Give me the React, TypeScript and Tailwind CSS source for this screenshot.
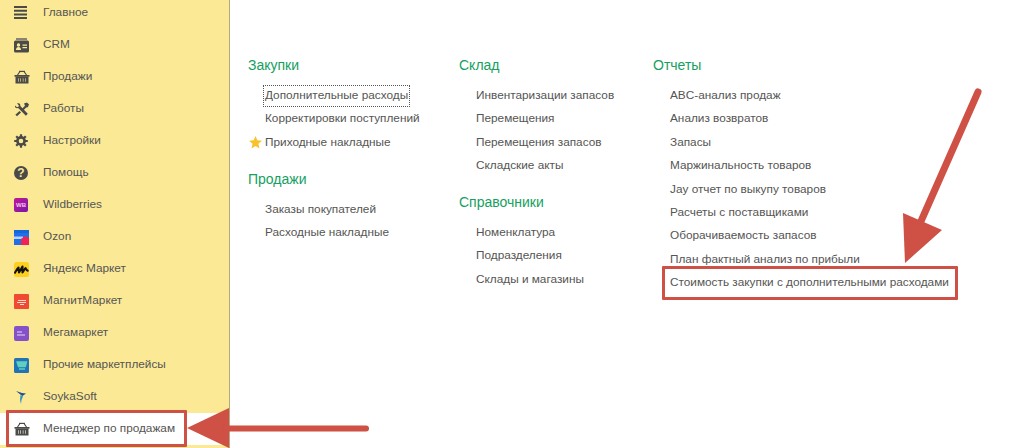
import React from 'react';

const ink = '#4a4a48';

const Basket = () => (
  <svg width="16" height="14" viewBox="0 0 16 14">
    <path d="M.5 5h15v1.700H.5z" fill={ink} />
    <path d="M3.500 5 6 1.500M12.500 5 10 1.500" stroke={ink} strokeWidth="1.200" fill="none" />
    <path d="M5 .8h6V2H5z" fill={ink} />
    <path fillRule="evenodd" d="M1.500 6.500h13V13.500h-13zM4 8.200v3.600h.6V8.200zm2.300 0v3.600h.6V8.200zm2.500 0v3.600h.6V8.200zm2.400 0v3.600h.6V8.200z" fill={ink} />
  </svg>
);

const Burger = () => (
  <svg width="14" height="14" viewBox="0 0 14 14">
    <path d="M0 0h13v2H0zM0 3.700h13v2H0zM0 7.400h13v2H0zM0 11.100h13v2H0z" fill={ink} />
  </svg>
);

const Crm = () => (
  <svg width="15" height="15" viewBox="0 0 15 15">
    <path d="M2 0h11v2H2z" fill="#8a8470" />
    <rect x="0" y="2.500" width="15" height="12" rx="1.500" fill={ink} />
    <circle cx="4.500" cy="7" r="1.700" fill="#fbe996" />
    <path d="M2 12c0-2 1-3 2.500-3S7 10 7 12zM8.500 6.500H13v1.200H8.500zM8.500 9H13v1.200H8.500z" fill="#fbe996" />
  </svg>
);

const Tools = () => (
  <svg width="16" height="15" viewBox="0 0 16 15">
    <path d="M1 3.500 3 5.200l1.500-.4.3-1.600L3 1.600C5 .4 6.800 2 6.300 4l7.500 7.800-1.900 1.900L4.200 6C2.300 6.600.5 5.400 1 3.500Z" fill={ink} />
    <path d="M10 1.500l3-1 2 2-1.200 2.800-1.600.3L9 8.800 7.500 7.300 11 3.800z" fill={ink} />
    <path d="M5.500 9 7 10.500 3 14.300 1.400 12.800z" fill={ink} />
  </svg>
);

const Gear = () => (
  <svg width="14" height="14" viewBox="0 0 14 14">
    <circle cx="7" cy="7" r="3.600" fill="none" stroke={ink} strokeWidth="2.600" />
    <path d="M7 .2v3M7 10.800v3M.2 7h3M10.800 7h3M2.200 2.200l2 2M9.800 9.800l2 2M11.800 2.200l-2 2M4.200 9.800l-2 2" stroke={ink} strokeWidth="2.200" />
  </svg>
);

const Help = () => (
  <div className="w-[14px] h-[14px] rounded-full bg-[#4a4a48] text-[#fbe996] text-[12px] font-bold leading-[14px] text-center">?</div>
);

const Wb = () => (
  <div className="w-[14px] h-[14px] rounded-[2px] bg-gradient-to-br from-[#c2109a] to-[#7a11a8] text-[#f3c8ee] text-[6px] font-bold leading-[14px] text-center">WB</div>
);

const Ozon = () => (
  <svg width="15" height="15" viewBox="0 0 15 15">
    <rect width="15" height="15" fill="#1f6fe8" />
    <path d="M0 0h15v3H0z" fill="#1566d8" />
    <path d="M0 6.500h9v2.500H0z" fill="#b9d4fb" />
    <path d="M7 15V9l4-3 4 2v7z" fill="#ee2458" />
  </svg>
);

const Yandex = () => (
  <svg width="15" height="15" viewBox="0 0 15 15">
    <rect width="15" height="15" rx="2.500" fill="#fcd01d" />
    <path d="M.5 11.500C2 9 3 7 4.500 5.500l.5 5 3.500-6v6l3-4.500c.5 1.500 1 2.500 3 3" fill="none" stroke="#111" strokeWidth="2.100" strokeLinejoin="round" />
  </svg>
);

const Magnit = () => (
  <svg width="15" height="15" viewBox="0 0 15 15">
    <rect width="15" height="15" rx="1" fill="#f04a32" />
    <path d="M3 8.500h9M4 6.500h8M6 10.500h4" stroke="#ffd9d0" strokeWidth="1" />
  </svg>
);

const Mega = () => (
  <svg width="15" height="15" viewBox="0 0 15 15">
    <rect width="15" height="15" rx="2" fill="#8650c8" />
    <path d="M3 5h5v2H3zM3 8h8v2H3z" fill="#b595df" />
  </svg>
);

const Others = () => (
  <svg width="15" height="15" viewBox="0 0 15 15">
    <rect width="15" height="15" rx="1.500" fill="#2273b5" />
    <path d="M3 4h9.500l-1.200 4.500H4.500zM5 11h6" stroke="#5fd0c0" strokeWidth="1.300" fill="#5fd0c0" />
  </svg>
);

const Soyka = () => (
  <svg width="15" height="15" viewBox="0 0 15 15">
    <path d="M2 1 8 3l4 .5-3.500 2.500L7 5z" fill="#234f8f" />
    <path d="M6.500 5 9 6.500 7.500 10 7 14 6 10z" fill="#2f93c4" />
  </svg>
);

const sections = [
  { label: 'Главное', icon: <Burger /> },
  { label: 'CRM', icon: <Crm /> },
  { label: 'Продажи', icon: <Basket /> },
  { label: 'Работы', icon: <Tools /> },
  { label: 'Настройки', icon: <Gear /> },
  { label: 'Помощь', icon: <Help /> },
  { label: 'Wildberries', icon: <Wb /> },
  { label: 'Ozon', icon: <Ozon /> },
  { label: 'Яндекс Маркет', icon: <Yandex /> },
  { label: 'МагнитМаркет', icon: <Magnit /> },
  { label: 'Мегамаркет', icon: <Mega /> },
  { label: 'Прочие маркетплейсы', icon: <Others /> },
  { label: 'SoykaSoft', icon: <Soyka /> },
];

const SideRow: React.FC<{ label: string; icon: React.ReactNode; active?: boolean }> = ({ label, icon, active }) => (
  <div className={active ? 'h-8 flex items-center bg-white' : 'h-8 flex items-center'}>
    <div className="w-[43px] pl-[14px] flex items-center shrink-0">{icon}</div>
    <span className="text-[11.800px] text-[#555553]">{label}</span>
  </div>
);

const Heading: React.FC<{ title: string; className?: string }> = ({ title, className }) => (
  <div className={`h-6 flex items-center text-[14px] text-[#15a060] ${className ?? ''}`}>{title}</div>
);

const Link: React.FC<{ title: string; star?: boolean; focused?: boolean }> = ({ title, star, focused }) => (
  <div className="h-[23.350px] flex items-center text-[11.800px] text-[#555553] relative pl-[17px]">
    {star && (
      <svg className="absolute left-[1px] top-[5px]" width="13" height="13" viewBox="0 0 13 13">
        <path d="M6.500 0 8.300 4.300 13 4.700 9.400 7.800 10.500 12.500 6.500 10 2.500 12.500 3.600 7.800 0 4.700 4.700 4.300Z" fill="#f8c22c" />
      </svg>
    )}
    <span className={focused ? 'outline-1 outline-dotted outline-[#555] outline-offset-1' : ''}>{title}</span>
  </div>
);

export default function App() {
  return (
    <div className="relative w-[1024px] h-[448px] overflow-hidden flex bg-white font-['Liberation_Sans',Arial,sans-serif]">
      <aside className="w-[229px] h-[452px] shrink-0 bg-[#fbe996] border-r border-[#b3aa80] -mt-[3px] box-content">
        {sections.map(s => (
          <SideRow key={s.label} label={s.label} icon={s.icon} />
        ))}
        <SideRow label="Менеджер по продажам" icon={<Basket />} active />
      </aside>

      <main className="flex-1 pt-[53px] pl-[18px] flex">
        <div className="w-[211px]">
          <Heading title="Закупки" className="mb-[7.300px]" />
          <Link title="Дополнительные расходы" focused />
          <Link title="Корректировки поступлений" />
          <Link title="Приходные накладные" star />
          <Heading title="Продажи" className="mt-[13.300px] mb-[6.300px]" />
          <Link title="Заказы покупателей" />
          <Link title="Расходные накладные" />
        </div>
        <div className="w-[194px]">
          <Heading title="Склад" className="mb-[7.300px]" />
          <Link title="Инвентаризации запасов" />
          <Link title="Перемещения" />
          <Link title="Перемещения запасов" />
          <Link title="Складские акты" />
          <Heading title="Справочники" className="mt-[12.500px] mb-[7.100px]" />
          <Link title="Номенклатура" />
          <Link title="Подразделения" />
          <Link title="Склады и магазины" />
        </div>
        <div>
          <Heading title="Отчеты" className="mb-[7.300px]" />
          <Link title="ABC-анализ продаж" />
          <Link title="Анализ возвратов" />
          <Link title="Запасы" />
          <Link title="Маржинальность товаров" />
          <Link title="Jay отчет по выкупу товаров" />
          <Link title="Расчеты с поставщиками" />
          <Link title="Оборачиваемость запасов" />
          <Link title="План фактный анализ по прибыли" />
          <Link title="Стоимость закупки с дополнительными расходами" />
        </div>
      </main>

      {/* red annotations on top of the screenshot */}
      <div className="absolute left-[6px] top-[410px] w-[181px] h-[37px] border-[3px] border-[#cf5044] rounded-[1px]" />
      <div className="absolute left-[662px] top-[266px] w-[296px] h-[34px] border-[3px] border-[#cf5044] rounded-[1px]" />
      <svg className="absolute left-0 top-0" width="1024" height="448" viewBox="0 0 1024 448">
        <path d="M187 428 229 408V448Z" fill="#cf5044" />
        <path d="M225 428.500H366" stroke="#cf5044" strokeWidth="6" strokeLinecap="round" />
        <path d="M903 213 942 230 905 263Z" fill="#cf5044" />
        <path d="M978 92 918 228" stroke="#cf5044" strokeWidth="7" strokeLinecap="round" />
      </svg>
    </div>
  );
}
